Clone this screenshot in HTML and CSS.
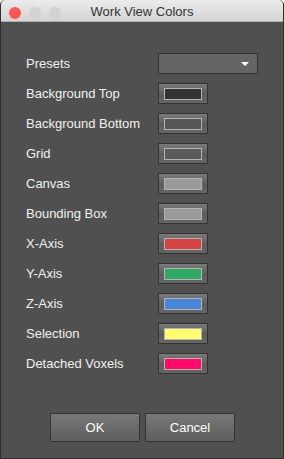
FILE: index.html
```html
<!DOCTYPE html>
<html lang="en">
<head>
    <meta charset="UTF-8">
    <meta name="viewport" content="width=device-width, initial-scale=1.0">
    <title>Work View Colors</title>
    <link rel="stylesheet" href="styles.css">
</head>
<body>
    <div class="window">
        <div class="titlebar">
            <div class="lights">
                <span class="light close"></span>
                <span class="light"></span>
                <span class="light"></span>
            </div>
            <div class="title">Work View Colors</div>
        </div>

        <div class="content">
            <div class="row">
                <label>Presets</label>
                <div class="select"><span class="arrow"></span></div>
            </div>
            <div class="row">
                <label>Background Top</label>
                <button class="swatch"><span class="chip bg-top"></span></button>
            </div>
            <div class="row">
                <label>Background Bottom</label>
                <button class="swatch"><span class="chip bg-bottom"></span></button>
            </div>
            <div class="row">
                <label>Grid</label>
                <button class="swatch"><span class="chip grid"></span></button>
            </div>
            <div class="row">
                <label>Canvas</label>
                <button class="swatch"><span class="chip canvas"></span></button>
            </div>
            <div class="row">
                <label>Bounding Box</label>
                <button class="swatch"><span class="chip bbox"></span></button>
            </div>
            <div class="row">
                <label>X-Axis</label>
                <button class="swatch"><span class="chip x-axis"></span></button>
            </div>
            <div class="row">
                <label>Y-Axis</label>
                <button class="swatch"><span class="chip y-axis"></span></button>
            </div>
            <div class="row">
                <label>Z-Axis</label>
                <button class="swatch"><span class="chip z-axis"></span></button>
            </div>
            <div class="row">
                <label>Selection</label>
                <button class="swatch"><span class="chip selection"></span></button>
            </div>
            <div class="row">
                <label>Detached Voxels</label>
                <button class="swatch"><span class="chip detached"></span></button>
            </div>
        </div>

        <div class="actions">
            <button class="btn">OK</button>
            <button class="btn">Cancel</button>
        </div>
    </div>
</body>
</html>
```

FILE: styles.css
```css
body {
    margin: 0;
    padding: 0;
    background-color: #ffffff;
    font-family: 'Liberation Sans', Arial, sans-serif;
}

.window {
    width: 284px;
    height: 459px;
    box-sizing: border-box;
    border: 1px solid #2e2e2e;
    border-top: none;
    border-radius: 5px 5px 0 0;
    background-color: #505050;
    display: flex;
    flex-direction: column;
    overflow: hidden;
}

.titlebar {
    height: 22px;
    flex: none;
    position: relative;
    background: linear-gradient(#ebebeb, #d4d4d4);
    border-bottom: 1px solid #b0b0b0;
    box-sizing: border-box;
    display: flex;
    align-items: center;
    justify-content: center;
}

.lights {
    position: absolute;
    left: 8px;
    top: 7px;
    display: flex;
    gap: 8px;
}

.light {
    width: 12px;
    height: 12px;
    border-radius: 50%;
    background-color: #d2d2d2;
}

.light.close {
    background-color: #fc5753;
}

.title {
    font-size: 13px;
    color: #333;
    padding-top: 2px;
}

.content {
    padding: 31px 0 0 25px;
    display: flex;
    flex-direction: column;
    gap: 9px;
}

.row {
    display: flex;
    align-items: center;
    height: 21px;
}

label {
    width: 132px;
    font-size: 13px;
    color: #f0f0f0;
}

.select {
    width: 100px;
    height: 21px;
    box-sizing: border-box;
    background-color: #656565;
    border: 1px solid #333;
    position: relative;
}

.arrow {
    position: absolute;
    right: 8px;
    top: 8px;
    width: 0;
    height: 0;
    border-left: 4px solid transparent;
    border-right: 4px solid transparent;
    border-top: 4px solid #fff;
}

.swatch {
    width: 50px;
    height: 21px;
    box-sizing: border-box;
    padding: 0;
    border: 1px solid #333;
    background: linear-gradient(#7a7a7a, #5c5c5c 55%, #666);
    display: flex;
    align-items: center;
    justify-content: center;
}

.chip {
    width: 38px;
    height: 12px;
    box-sizing: border-box;
    border: 1px solid #b4b4b4;
}

.bg-top { background-color: #333333; }
.bg-bottom { background-color: #555555; }
.grid { background-color: #5a5a5a; }
.canvas { background-color: #999999; }
.bbox { background-color: #999999; }
.x-axis { background-color: #d44444; }
.y-axis { background-color: #2ea862; }
.z-axis { background-color: #4a86d8; }
.selection { background-color: #ffff70; }
.detached { background-color: #ff0a6a; }

.actions {
    margin-top: auto;
    padding-bottom: 16px;
    display: flex;
    justify-content: center;
    gap: 5px;
    padding-left: 1px;
}

.btn {
    width: 90px;
    height: 29px;
    border: 1px solid #333;
    border-radius: 1px;
    background: linear-gradient(#787878, #5e5e5e);
    color: #fff;
    font-family: 'Liberation Sans', Arial, sans-serif;
    font-size: 13px;
}
```
